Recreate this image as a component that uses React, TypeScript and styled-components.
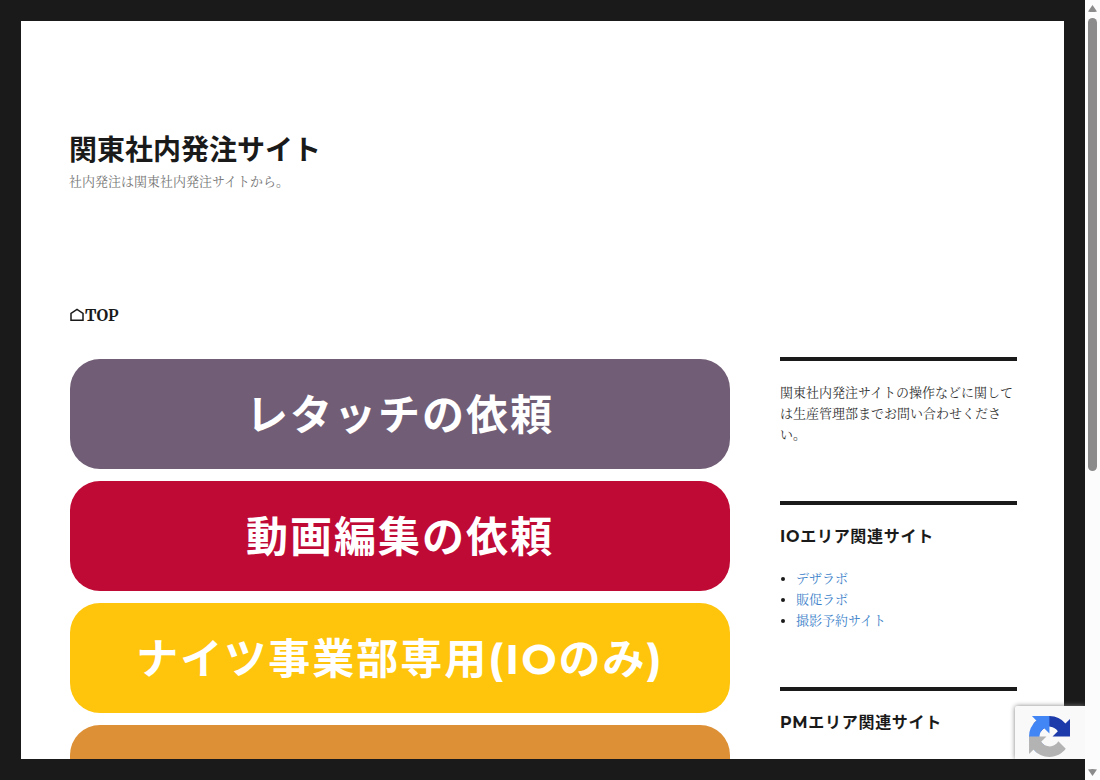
import React from "react";
import styled, { createGlobalStyle } from "styled-components";

const ink = "#1a1a1a";
const serif = `"Merriweather", "Liberation Serif", "Noto Serif CJK JP", "Noto Sans CJK JP", serif`;
const sans = `"Montserrat", "Lato", "Noto Sans CJK JP", sans-serif`;

const GlobalStyle = createGlobalStyle`
  *, *::before, *::after { box-sizing: border-box; }
  body { margin: 0; background: ${ink}; color: ${ink}; font-family: ${serif}; font-size: 13px; line-height: 21px; }
  h1, h2, p, ul { margin: 0; padding: 0; }
`;

const Screen = styled.div`
  display: flex;
  height: 100vh;
`;

const Frame = styled.div`
  position: relative;
  display: flex;
  flex: 1;
  min-width: 0;
  padding: 21px;
  background: ${ink};
`;

const Sheet = styled.div`
  flex: 1;
  min-width: 0;
  overflow: hidden;
  padding: 0 47px 0 48px;
  background: #fff;
`;

const Header = styled.header`
  padding: 108px 0 111px;
`;

const SiteTitle = styled.h1`
  font-family: ${sans};
  font-size: 28px;
  font-weight: 700;
  line-height: 42px;

  a { color: inherit; text-decoration: none; }
`;

const Tagline = styled.p`
  color: #757575;
`;

const Nav = styled.nav`
  display: flex;
  padding-bottom: 30px;
  font-size: 16px;
  font-weight: 700;
  line-height: 24px;

  a { display: flex; align-items: center; color: inherit; text-decoration: none; }
  svg { display: block; }
`;

const Columns = styled.div`
  display: grid;
  grid-template-columns: minmax(0, 1fr) 25%;
  gap: 50px;
`;

const Main = styled.main`
  display: flex;
  flex-direction: column;
  gap: 12px;
  padding: 2px 0 0 1px;
`;

const OrderButton = styled.button<{ $color: string }>`
  flex: none;
  min-height: 110px;
  padding: 2px 16px 0;
  border: 0;
  border-radius: 30px;
  background: ${(p) => p.$color};
  color: #fff;
  font-family: ${sans};
  font-size: 42px;
  font-weight: 700;
  line-height: 48px;
  letter-spacing: 2px;
`;

const Sidebar = styled.aside`
  display: flex;
  flex-direction: column;
  gap: 56px;
`;

const Widget = styled.section`
  padding-top: 21px;
  border-top: 4px solid ${ink};
`;

const Note = styled.p`
  color: #333;
`;

const WidgetTitle = styled.h2`
  margin-bottom: 21px;
  font-family: ${sans};
  font-size: 16px;
  font-weight: 700;
  line-height: 21px;
  letter-spacing: 0.045em;
`;

const LinkList = styled.ul`
  && { margin-left: 16px; }

  a { color: #3c82ca; text-decoration: none; }
`;

const Badge = styled.div`
  position: absolute;
  right: 0;
  bottom: 21px;
  width: 70px;
  height: 53px;
  padding: 10px 0 0 14px;
  overflow: hidden;
  border-radius: 2px 0 0 0;
  background: #f9f9f9;
  box-shadow: 0 0 5px #808080;
  clip-path: inset(-6px 0 0 -6px);

  svg { display: block; }
`;

const Scrollbar = styled.div`
  display: flex;
  flex-direction: column;
  align-items: center;
  justify-content: space-between;
  width: 15px;
  padding: 5px 0 4px;
  background: #fcfcfc;

  svg { display: block; flex: none; }
`;

const Track = styled.div`
  flex: 1;
  width: 9px;
  padding: 6px 0 8px;
`;

const Thumb = styled.div`
  height: 61%;
  border-radius: 5px;
  background: #8b8b8b;
`;

const orders = [
  { label: "レタッチの依頼", color: "#715e76" },
  { label: "動画編集の依頼", color: "#bf0a35" },
  { label: "ナイツ事業部専用(IOのみ)", color: "#ffc40c" },
  { label: "", color: "#dd9035" },
];

const areaLinks = ["デザラボ", "販促ラボ", "撮影予約サイト"];

export default function App() {
  return (
    <>
      <GlobalStyle />
      <Screen>
        <Frame>
          <Sheet>
            <Header>
              <SiteTitle><a href="#top">関東社内発注サイト</a></SiteTitle>
              <Tagline>社内発注は関東社内発注サイトから。</Tagline>
            </Header>
            <Nav>
              <a href="#top">
                <svg width="16" height="14" viewBox="0 0 16 14" aria-hidden="true">
                  <path fill="none" stroke={ink} strokeWidth="1.5" d="M2 12.300V5.500L8 1.500l6 4v6.800z" />
                </svg>
                TOP
              </a>
            </Nav>
            <Columns>
              <Main>
                {orders.map((o) => (
                  <OrderButton key={o.color} type="button" $color={o.color}>{o.label}</OrderButton>
                ))}
              </Main>
              <Sidebar>
                <Widget>
                  <Note>関東社内発注サイトの操作などに関しては生産管理部までお問い合わせください。</Note>
                </Widget>
                <Widget>
                  <WidgetTitle>IOエリア関連サイト</WidgetTitle>
                  <LinkList>
                    {areaLinks.map((l) => <li key={l}><a href="#area">{l}</a></li>)}
                  </LinkList>
                </Widget>
                <Widget>
                  <WidgetTitle>PMエリア関連サイト</WidgetTitle>
                </Widget>
              </Sidebar>
            </Columns>
          </Sheet>
          <Badge>
            <svg width="41" height="41" viewBox="0 0 64 64" aria-hidden="true">
              <path fill="#1c3aa9" d="M64 31.955a33 33 0 0 0-.035-1.382V4.687l-7.156 7.156A31.9 31.9 0 0 0 32.068.12C21.686.12 12.463 5.102 6.62 12.819l11.73 11.853a15.5 15.5 0 0 1 4.754-5.334c2.05-1.6 4.952-2.906 8.968-2.906.485 0 .86.057 1.135.163 4.976.393 9.288 3.14 11.828 7.124l-8.302 8.302L64 31.955" />
              <path fill="#4285f4" d="M31.862.094c-.463.002-.924.013-1.382.035H4.594l7.156 7.156A31.9 31.9 0 0 0 .028 32.026c0 10.382 4.982 19.605 12.699 25.448l11.853-11.73a15.5 15.5 0 0 1-5.334-4.754c-1.6-2.05-2.906-4.952-2.906-8.968 0-.485.057-.86.163-1.135.393-4.976 3.14-9.288 7.124-11.828l8.302 8.302L31.862.094" />
              <path fill="#b3b3b3" d="M.028 32.026c.002.463.013.924.035 1.382v25.886l7.156-7.156A31.9 31.9 0 0 0 31.96 63.86c10.382 0 19.605-4.982 25.448-12.699L45.678 39.31a15.5 15.5 0 0 1-4.754 5.334c-2.05 1.6-4.952 2.906-8.968 2.906-.485 0-.86-.057-1.135-.163-4.976-.393-9.288-3.14-11.828-7.124l8.302-8.302L.028 32.026" />
            </svg>
          </Badge>
        </Frame>
        <Scrollbar aria-hidden="true">
          <svg width="9" height="7" viewBox="0 0 9 7"><path fill="#8b8b8b" d="M4.500 0 9 6.500Q4.500 7.500 0 6.500z" /></svg>
          <Track><Thumb /></Track>
          <svg width="9" height="7" viewBox="0 0 9 7"><path fill="#8b8b8b" d="M4.500 7 0 .5Q4.500-.5 9 .5z" /></svg>
        </Scrollbar>
      </Screen>
    </>
  );
}
